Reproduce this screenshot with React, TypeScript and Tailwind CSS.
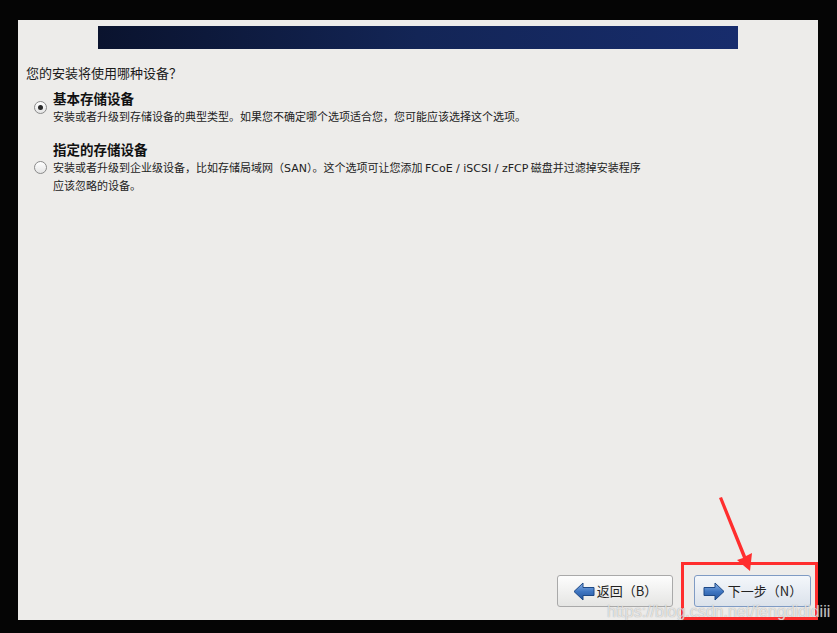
import React from 'react';

const font = { fontFamily: '"Noto Sans CJK SC", "DejaVu Sans", sans-serif' };
const latin = { fontFamily: '"DejaVu Sans", sans-serif' };

function ArrowIcon({ dir }: { dir: 'left' | 'right' }) {
  const id = `grad-${dir}`;
  return (
    <svg width="22" height="19" viewBox="0 0 22 19" className="shrink-0">
      <defs>
        <linearGradient id={id} x1="0" y1="0" x2="0" y2="1">
          <stop offset="0" stopColor="#8db4e6" />
          <stop offset="0.5" stopColor="#3f76c2" />
          <stop offset="1" stopColor="#24559c" />
        </linearGradient>
      </defs>
      <g transform={dir === 'right' ? 'translate(22 0) scale(-1 1)' : undefined}>
        <path
          d="M1 9.5 L10 1 L10 5.5 L21 5.5 L21 13.5 L10 13.5 L10 18 Z"
          fill={`url(#${id})`}
          stroke="#1d4886"
          strokeWidth="1"
          strokeLinejoin="round"
        />
      </g>
    </svg>
  );
}

function Radio({ checked }: { checked?: boolean }) {
  return (
    <span className="flex h-[13px] w-[13px] shrink-0 items-center justify-center rounded-full border border-[#8a8a8a] bg-gradient-to-b from-[#ffffff] to-[#e4e4e4]">
      {checked && <span className="h-[5px] w-[5px] rounded-full bg-[#2a2a2a]" />}
    </span>
  );
}

function NavButton({ dir, label, focused }: { dir: 'left' | 'right'; label: string; focused?: boolean }) {
  return (
    <button
      className={
        focused
          ? 'flex h-[32px] w-[117px] items-center justify-center gap-[3px] rounded-[3px] border border-[#7f9bc4] bg-gradient-to-b from-[#f4f7fb] to-[#dbe2eb] text-[13px] text-[#222]'
          : 'flex h-[32px] w-[116px] items-center justify-center gap-[2px] rounded-[3px] border border-[#a9a9a9] bg-gradient-to-b from-[#fdfdfd] to-[#e5e5e3] text-[13px] text-[#222]'
      }
      style={font}
    >
      <ArrowIcon dir={dir} />
      <span>{label}</span>
    </button>
  );
}

export default function App() {
  return (
    <div lang="zh-CN" className="relative h-[633px] w-[837px] overflow-hidden bg-[#050505]" style={font}>
      <div className="ml-[18px] pt-[20px]">
        <div className="flex h-[600px] w-[800px] flex-col bg-[#edecea]">
          <div className="ml-[80px] mt-[6px] h-[23px] w-[640px] bg-gradient-to-r from-[#0a132e] via-[#132556] to-[#172c6c]" />

          <div className="ml-[8px] mt-[16px] text-[13px] leading-[16px] text-[#1a1a1a]">
            您的安装将使用哪种设备？
          </div>

          <div className="ml-[16px] mt-[9px] flex items-center gap-[6px]">
            <Radio checked />
            <div>
              <div className="text-[13.5px] font-bold leading-[17px] text-[#111]">基本存储设备</div>
              <div className="mt-[1px] text-[11px] leading-[16px] text-[#222]">
                安装或者升级到存储设备的典型类型。如果您不确定哪个选项适合您，您可能应该选择这个选项。
              </div>
            </div>
          </div>

          <div className="ml-[16px] mt-[17px] flex items-center gap-[6px]">
            <Radio />
            <div>
              <div className="text-[13.5px] font-bold leading-[17px] text-[#111]">指定的存储设备</div>
              <div className="mt-[1px] text-[11px] leading-[16px] text-[#222]">
                安装或者升级到企业级设备，比如存储局域网（<span style={latin}>SAN</span>）。这个选项可让您添加{' '}
                <span style={latin}>FCoE / iSCSI / zFCP</span> 磁盘并过滤掉安装程序
                <br />
                应该忽略的设备。
              </div>
            </div>
          </div>

          <div className="mt-auto mb-[13px] mr-[7px] flex justify-end gap-[21px]">
            <NavButton dir="left" label="返回（B）" />
            <NavButton dir="right" label="下一步（N）" focused />
          </div>
        </div>
      </div>

      {/* annotation overlay */}
      <div className="pointer-events-none absolute left-[681px] top-[562px] h-[58px] w-[137px] border-[3px] border-[#ff2e2e]" />
      <svg className="pointer-events-none absolute left-0 top-0" width="837" height="633">
        <polygon points="719,498 722,497 746,556 752,553 750,571 737,560 743,558" fill="#ff2e2e" />
      </svg>

      <div
        className="pointer-events-none absolute left-[607px] top-[601px] text-[16px] leading-[22px] text-white/70"
        style={{ fontFamily: '"Liberation Sans", Arial, sans-serif', textShadow: '0 0 1px rgba(110,110,110,0.7)' }}
      >
        https://blog.csdn.net/fengdididiii
      </div>
    </div>
  );
}
